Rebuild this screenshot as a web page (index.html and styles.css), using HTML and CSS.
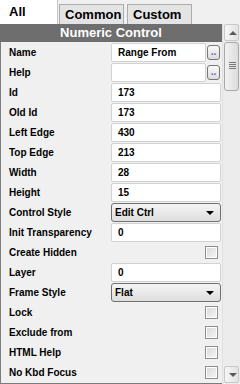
FILE: index.html
```html
<!DOCTYPE html>
<html lang="en">
<head>
    <meta charset="UTF-8">
    <title>Numeric Control</title>
    <link rel="stylesheet" href="styles.css">
</head>
<body>
    <div class="tabs">
        <div class="tab active">All</div>
        <div class="tab">Common</div>
        <div class="tab">Custom</div>
    </div>
    <div class="main">
        <div class="panel">
            <div class="header">Numeric Control</div>
            <div class="row"><span class="label">Name</span><div class="field"><span class="input short">Range From</span><span class="dots">..</span></div></div>
            <div class="row"><span class="label">Help</span><div class="field"><span class="input short"></span><span class="dots">..</span></div></div>
            <div class="row"><span class="label">Id</span><div class="field"><span class="input">173</span></div></div>
            <div class="row"><span class="label">Old Id</span><div class="field"><span class="input">173</span></div></div>
            <div class="row"><span class="label">Left Edge</span><div class="field"><span class="input">430</span></div></div>
            <div class="row"><span class="label">Top Edge</span><div class="field"><span class="input">213</span></div></div>
            <div class="row"><span class="label">Width</span><div class="field"><span class="input">28</span></div></div>
            <div class="row"><span class="label">Height</span><div class="field"><span class="input">15</span></div></div>
            <div class="row"><span class="label">Control Style</span><div class="field"><span class="select">Edit Ctrl<i class="arrow"></i></span></div></div>
            <div class="row"><span class="label">Init Transparency</span><div class="field"><span class="input">0</span></div></div>
            <div class="row"><span class="label">Create Hidden</span><div class="field check"><span class="box"></span></div></div>
            <div class="row"><span class="label">Layer</span><div class="field"><span class="input">0</span></div></div>
            <div class="row"><span class="label">Frame Style</span><div class="field"><span class="select">Flat<i class="arrow"></i></span></div></div>
            <div class="row"><span class="label">Lock</span><div class="field check"><span class="box"></span></div></div>
            <div class="row"><span class="label">Exclude from</span><div class="field check"><span class="box"></span></div></div>
            <div class="row"><span class="label">HTML Help</span><div class="field check"><span class="box"></span></div></div>
            <div class="row"><span class="label">No Kbd Focus</span><div class="field check"><span class="box"></span></div></div>
        </div>
        <div class="scroll">
            <div class="sb-btn"><i class="up"></i></div>
            <div class="thumb"><i class="grip"></i></div>
            <div class="track"></div>
            <div class="sb-btn"><i class="down"></i></div>
        </div>
    </div>
</body>
</html>
```
FILE: styles.css
```css
body { margin: 0; width: 240px; height: 384px; overflow: hidden; background: #f0f0f0; font-family: "Liberation Sans", Arial, sans-serif; font-weight: bold; color: #000; }
.tabs { display: flex; align-items: flex-end; height: 24px; }
.tab { box-sizing: border-box; height: 20px; width: 65px; margin-left: 3px; padding-left: 5px; font-size: 13px; line-height: 20px; background: #e4e4e4; border: 1px solid #acacac; border-bottom: none; }
.tab.active { height: 24px; width: 58px; margin-left: 0; margin-right: -2px; padding-left: 9px; line-height: 24px; background: #fff; border: none; border-right: 1px solid #c8c8c8; }
.main { display: flex; height: 360px; }
.panel { width: 222px; box-sizing: border-box; border-left: 1px solid #7c7c7c; border-bottom: 1px solid #7c7c7c; }
.header { height: 18px; line-height: 18px; margin-left: -1px; background: #6e6e6e; color: #fff; font-size: 13px; text-align: center; }
.row { display: flex; align-items: center; height: 20px; font-size: 10px; }
.label { width: 102px; padding-left: 8px; }
.field { display: flex; align-items: center; width: 110px; }
.input { box-sizing: border-box; display: block; width: 110px; height: 19px; line-height: 17px; padding-left: 6px; background: #fff; border: 1px solid #d2d2d2; border-radius: 2px; font-size: 10px; }
.input.short { width: 95px; margin-right: 1px; }
.dots { box-sizing: border-box; width: 13px; height: 15px; line-height: 11px; text-align: center; font-size: 10px; color: #6060c0; border: 1px solid #777; border-radius: 3px; background: linear-gradient(#fafafa, #dcdcdc); }
.select { box-sizing: border-box; position: relative; display: block; width: 110px; height: 19px; line-height: 17px; padding-left: 3px; border: 1px solid #707070; border-radius: 3px; background: linear-gradient(#f4f4f4, #dedede); font-size: 10px; }
.arrow { position: absolute; right: 6px; top: 7px; border-left: 4px solid transparent; border-right: 4px solid transparent; border-top: 4px solid #000; }
.check { justify-content: flex-end; }
.box { box-sizing: border-box; width: 13px; height: 13px; margin-right: 3px; border: 1px solid #8e8e8e; box-shadow: inset 0 0 0 1px #fff; background: linear-gradient(135deg, #d8d8d8, #f6f6f6); }
.scroll { display: flex; flex-direction: column; width: 18px; box-sizing: border-box; padding: 0 1px 1px 1px; background: #ececec; border-left: 1px solid #e0e0e0; }
.sb-btn { position: relative; box-sizing: border-box; height: 17px; border: 1px solid #c8c8c8; border-radius: 2px; background: linear-gradient(90deg, #f6f6f6, #e2e2e2); }
.up, .down { position: absolute; left: 4px; top: 6px; border-left: 4px solid transparent; border-right: 4px solid transparent; }
.up { border-bottom: 4px solid #5a5a5a; }
.down { border-top: 4px solid #5a5a5a; }
.thumb { position: relative; box-sizing: border-box; height: 49px; margin-top: 1px; border: 1px solid #a8a8a8; border-radius: 3px; background: linear-gradient(90deg, #f2f2f2, #dcdcdc); }
.grip { position: absolute; left: 4px; top: 19px; width: 7px; height: 7px; background: repeating-linear-gradient(#777 0 1px, transparent 1px 2px); }
.track { flex: 1; }
```
